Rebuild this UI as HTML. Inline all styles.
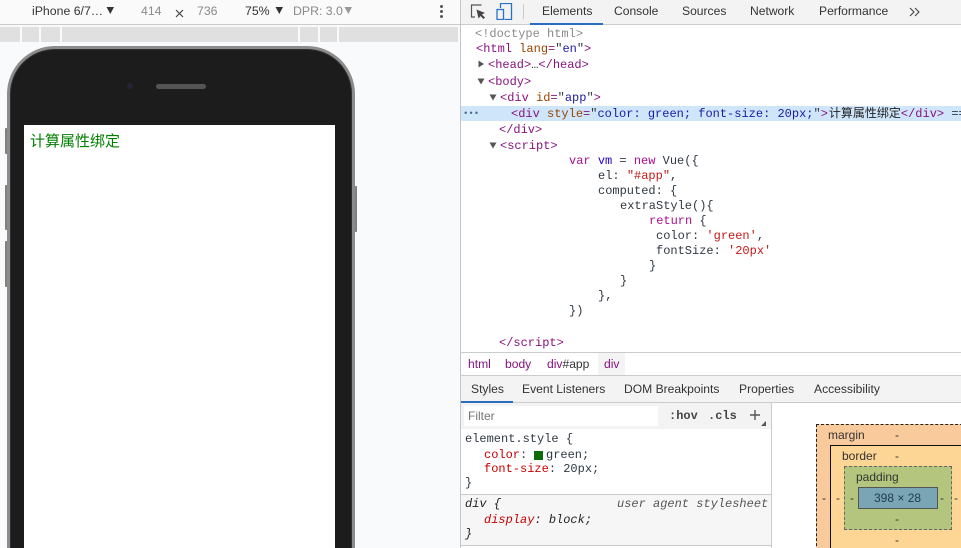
<!DOCTYPE html>
<html lang="zh">
<head>
<meta charset="utf-8">
<style>
html,body{margin:0;padding:0;width:961px;height:548px;overflow:hidden;background:#fff}
body{font-family:"Liberation Sans","Noto Sans CJK SC",sans-serif;font-size:12px;color:#333}
#w{position:relative;width:961px;height:548px;overflow:hidden}
.a{position:absolute;white-space:pre}
.r{position:absolute}
.m{font-family:"Liberation Mono","Noto Sans CJK SC",monospace;font-size:12px;line-height:14px;color:#303942;margin-top:1px}
.t{color:#881280}.n{color:#994500}.v{color:#1a1aa6}.g{color:#8a8a8a}.k{color:#aa0d91}.s{color:#c41a16}.b{color:#222}
.p{color:#c80000}
.tab{font-size:12.1px;line-height:14px;color:#333}
.bm{font-size:12px;line-height:14px;color:#333}
</style>
</head>
<body>
<div id="w">
<!-- left -->
<div class="r" style="left:0;top:0;width:460px;height:548px;background:#f9fafb"></div>
<div class="r" style="left:0;top:0;width:460px;height:24px;background:#fafafa"></div>
<div class="r" style="left:0;top:24px;width:460px;height:1px;background:#cbcbcb"></div>
<div class="a" style="left:32px;top:4px;font-size:12.3px;line-height:14px;color:#333">iPhone 6/7…</div>
<svg class="r" style="left:106px;top:6px" width="9" height="9"><path d="M0.5 1H8L4.3 8Z" fill="#333"/></svg>
<div class="a" style="left:141px;top:4px;font-size:12.3px;line-height:14px;color:#8a8a8a">414</div>
<svg class="r" style="left:175px;top:9px" width="10" height="10"><path d="M1 1L8 8M8 1L1 8" stroke="#444" stroke-width="1.2"/></svg>
<div class="a" style="left:197px;top:4px;font-size:12.3px;line-height:14px;color:#8a8a8a">736</div>
<div class="a" style="left:245px;top:4px;font-size:12.3px;line-height:14px;color:#333">75%</div>
<svg class="r" style="left:275px;top:6px" width="9" height="9"><path d="M0.5 1H8L4.3 8Z" fill="#333"/></svg>
<div class="a" style="left:293px;top:4px;font-size:12.3px;line-height:14px;color:#8a8a8a">DPR: 3.0</div>
<svg class="r" style="left:344px;top:6px" width="9" height="9"><path d="M0.5 1H8L4.3 8Z" fill="#999"/></svg>
<div class="r" style="left:440px;top:5px;width:3px;height:3px;border-radius:2px;background:#555"></div>
<div class="r" style="left:440px;top:10px;width:3px;height:3px;border-radius:2px;background:#555"></div>
<div class="r" style="left:440px;top:15px;width:3px;height:3px;border-radius:2px;background:#555"></div>
<!-- ruler -->
<div class="r" style="left:0;top:27px;width:20px;height:15px;background:#e0e0e0"></div>
<div class="r" style="left:22px;top:27px;width:17px;height:15px;background:#e0e0e0"></div>
<div class="r" style="left:41px;top:27px;width:19px;height:15px;background:#e0e0e0"></div>
<div class="r" style="left:62px;top:27px;width:236px;height:15px;background:#e0e0e0"></div>
<div class="r" style="left:300px;top:27px;width:18px;height:15px;background:#e0e0e0"></div>
<div class="r" style="left:320px;top:27px;width:17px;height:15px;background:#e0e0e0"></div>
<div class="r" style="left:339px;top:27px;width:119px;height:15px;background:#e0e0e0"></div>
<!-- phone -->
<div class="r" style="left:5px;top:128px;width:4px;height:26px;background:#808080;border-radius:1px"></div>
<div class="r" style="left:5px;top:185px;width:4px;height:45px;background:#808080;border-radius:1px"></div>
<div class="r" style="left:5px;top:241px;width:4px;height:46px;background:#808080;border-radius:1px"></div>
<div class="r" style="left:353px;top:186px;width:4px;height:46px;background:#808080;border-radius:1px"></div>
<div class="r" style="left:7px;top:46px;width:342px;height:502px;border:3px solid #8c8c8c;border-bottom:0;border-radius:48px 48px 0 0;background:#1c1c1c;box-shadow:inset 0 0 0 1px #2f2f2f"></div>
<div class="r" style="left:127px;top:83px;width:6px;height:6px;border-radius:3px;background:#23233a"></div>
<div class="r" style="left:156px;top:84px;width:50px;height:5px;border-radius:3px;background:#555"></div>
<div class="r" style="left:24px;top:125px;width:311px;height:423px;background:#fff"></div>
<div class="a" style="left:30px;top:133px;font-size:15px;line-height:18px;color:#008000">计算属性绑定</div>

<!-- devtools -->
<div class="r" style="left:460px;top:0;width:1px;height:548px;background:#c4c4c4"></div>
<div class="r" style="left:461px;top:0;width:500px;height:24px;background:#f3f3f3"></div>
<div class="r" style="left:461px;top:24px;width:500px;height:1px;background:#cbcbcb"></div>
<svg class="r" style="left:470px;top:3px" width="18" height="17" fill="none"><path d="M11.5 2H1.5V14H5" stroke="#555" stroke-width="1.2"/><path d="M6.5 6.5L15 10L11.8 11.5L15 14.5L13.5 16L10.5 13L8.5 15.5Z" fill="#444"/></svg>
<svg class="r" style="left:496px;top:3px" width="17" height="17" fill="none"><path d="M4.5 5.5V1H15.5V17H8.5" stroke="#2a72c8" stroke-width="1.3" transform="translate(0,-0.5)"/><rect x="1" y="6.5" width="6.5" height="10" stroke="#2a72c8" stroke-width="1.3"/></svg>
<div class="r" style="left:523px;top:4px;width:1px;height:15px;background:#ccc"></div>
<div class="a tab" style="left:542px;top:4px">Elements</div>
<div class="a tab" style="left:614px;top:4px">Console</div>
<div class="a tab" style="left:682px;top:4px">Sources</div>
<div class="a tab" style="left:750px;top:4px">Network</div>
<div class="a tab" style="left:819px;top:4px">Performance</div>
<svg class="r" style="left:909px;top:7px" width="11" height="10" fill="none"><path d="M1 1L5 5L1 9M6 1L10 5L6 9" stroke="#444" stroke-width="1.1"/></svg>
<div class="r" style="left:530px;top:23px;width:73px;height:2px;background:#2a6cc0"></div>

<div class="r" style="left:461px;top:106px;width:500px;height:15px;background:#cfe5fa"></div>
<div class="a m g" style="left:475px;top:26px">&lt;!doctype html&gt;</div>
<div class="a m" style="left:476px;top:41px"><span class="t">&lt;html</span> <span class="n">lang</span><span class="t">=</span>"<span class="v">en</span>"<span class="t">&gt;</span></div>
<svg class="r" style="left:478px;top:60px" width="7" height="8"><path d="M0.5 0.5L6 4L0.5 7.5Z" fill="#555"/></svg>
<div class="a m" style="left:488px;top:57px"><span class="t">&lt;head&gt;</span>…<span class="t">&lt;/head&gt;</span></div>
<svg class="r" style="left:477px;top:78px" width="8" height="7"><path d="M0.5 0.5H7.5L4 6.5Z" fill="#555"/></svg>
<div class="a m" style="left:488px;top:74px"><span class="t">&lt;body&gt;</span></div>
<svg class="r" style="left:489px;top:94px" width="8" height="7"><path d="M0.5 0.5H7.5L4 6.5Z" fill="#555"/></svg>
<div class="a m" style="left:500px;top:90px"><span class="t">&lt;div</span> <span class="n">id</span><span class="t">=</span>"<span class="v">app</span>"<span class="t">&gt;</span></div>
<div class="a m" style="left:463px;top:106px;color:#4a6a90;font-size:9px">•••</div>
<div class="a m" style="left:511px;top:106px"><span class="t">&lt;div</span> <span class="n">style</span><span class="t">=</span>"<span class="v">color: green; font-size: 20px;</span>"<span class="t">&gt;</span><span class="b" style="margin-left:1px">计算属性绑定</span><span class="t">&lt;/div&gt;</span> == $0</div>
<div class="a m" style="left:499px;top:122px"><span class="t">&lt;/div&gt;</span></div>
<svg class="r" style="left:489px;top:142px" width="8" height="7"><path d="M0.5 0.5H7.5L4 6.5Z" fill="#555"/></svg>
<div class="a m" style="left:500px;top:138px"><span class="t">&lt;script&gt;</span></div>
<div class="a m" style="left:569px;top:153px"><span class="k">var</span> <span style="color:#1c00cf">vm</span> = <span class="k">new</span> Vue({</div>
<div class="a m" style="left:598px;top:168px">el: <span class="s">"#app"</span>,</div>
<div class="a m" style="left:598px;top:183px">computed: {</div>
<div class="a m" style="left:620px;top:198px">extraStyle(){</div>
<div class="a m" style="left:649px;top:213px"><span class="k">return</span> {</div>
<div class="a m" style="left:656px;top:228px">color: <span class="s">'green'</span>,</div>
<div class="a m" style="left:656px;top:243px">fontSize: <span class="s">'20px'</span></div>
<div class="a m" style="left:649px;top:258px">}</div>
<div class="a m" style="left:620px;top:273px">}</div>
<div class="a m" style="left:598px;top:288px">},</div>
<div class="a m" style="left:569px;top:303px">})</div>
<div class="a m" style="left:499px;top:335px"><span class="t">&lt;/script&gt;</span></div>

<!-- breadcrumb -->
<div class="r" style="left:461px;top:352px;width:500px;height:1px;background:#cbcbcb"></div>
<div class="r" style="left:598px;top:353px;width:27px;height:22px;background:#f3f3f3"></div>
<div class="a tab" style="left:468px;top:357px;color:#881280">html</div>
<div class="a tab" style="left:505px;top:357px;color:#881280">body</div>
<div class="a tab" style="left:547px;top:357px"><span style="color:#881280">div</span>#app</div>
<div class="a tab" style="left:604px;top:357px;color:#881280">div</div>
<div class="r" style="left:461px;top:375px;width:500px;height:1px;background:#cbcbcb"></div>
<!-- sub tabs -->
<div class="r" style="left:461px;top:376px;width:500px;height:27px;background:#f3f3f3"></div>
<div class="r" style="left:461px;top:402px;width:500px;height:1px;background:#cbcbcb"></div>
<div class="r" style="left:461px;top:401px;width:52px;height:2px;background:#2a6cc0"></div>
<div class="a tab" style="left:471px;top:382px">Styles</div>
<div class="a tab" style="left:522px;top:382px">Event Listeners</div>
<div class="a tab" style="left:624px;top:382px">DOM Breakpoints</div>
<div class="a tab" style="left:739px;top:382px">Properties</div>
<div class="a tab" style="left:814px;top:382px">Accessibility</div>
<!-- styles pane -->
<div class="r" style="left:461px;top:403px;width:310px;height:26px;background:#f3f3f3"></div>
<div class="r" style="left:464px;top:406px;width:194px;height:20px;background:#fff"></div>
<div class="a" style="left:468px;top:409px;font-size:12px;line-height:14px;color:#757575">Filter</div>
<div class="a m" style="left:669px;top:408px;font-weight:bold;color:#444">:hov</div>
<div class="a m" style="left:708px;top:408px;font-weight:bold;color:#444">.cls</div>
<svg class="r" style="left:749px;top:409px" width="12" height="12"><path d="M6 1V11M1 6H11" stroke="#555" stroke-width="1.4"/></svg>
<svg class="r" style="left:761px;top:421px" width="5" height="5"><path d="M5 0V5H0Z" fill="#555"/></svg>
<div class="r" style="left:771px;top:403px;width:1px;height:145px;background:#cbcbcb"></div>
<div class="a m" style="left:465px;top:431px">element.style {</div>
<div class="a m" style="left:484px;top:447px"><span class="p">color</span>: </div>
<div class="r" style="left:534px;top:451px;width:9px;height:9px;background:#0b6b0b"></div>
<div class="a m" style="left:546px;top:447px">green;</div>
<div class="a m" style="left:484px;top:461px"><span class="p">font-size</span>: 20px;</div>
<div class="a m" style="left:465px;top:475px">}</div>
<div class="r" style="left:461px;top:494px;width:310px;height:1px;background:#cbcbcb"></div>
<div class="r" style="left:461px;top:495px;width:310px;height:50px;background:#f6f6f6"></div>
<div class="a m" style="left:465px;top:496px;font-style:italic;color:#222">div {</div>
<div class="a m" style="left:617px;top:496px;font-style:italic;color:#555">user agent stylesheet</div>
<div class="a m" style="left:484px;top:512px;font-style:italic;color:#222"><span class="p">display</span>: block;</div>
<div class="a m" style="left:465px;top:526px;font-style:italic;color:#222">}</div>
<div class="r" style="left:461px;top:545px;width:310px;height:1px;background:#cbcbcb"></div>
<!-- box model -->
<div class="r" style="left:816px;top:424px;width:160px;height:140px;background:#f9cb9c;border:1px dashed #222"></div>
<div class="r" style="left:830px;top:445px;width:140px;height:120px;background:#fdd595;border:1px solid #111"></div>
<div class="r" style="left:844px;top:466px;width:106px;height:62px;background:#b4c67d;border:1px dashed #666"></div>
<div class="r" style="left:858px;top:487px;width:78px;height:20px;background:#7aa5b5;border:1px solid #555"></div>
<div class="a bm" style="left:828px;top:428px">margin</div>
<div class="a bm" style="left:895px;top:428px">-</div>
<div class="a bm" style="left:842px;top:449px">border</div>
<div class="a bm" style="left:895px;top:449px">-</div>
<div class="a bm" style="left:856px;top:470px">padding</div>
<div class="a bm" style="left:874px;top:491px;color:#1f3a4d">398 × 28</div>
<div class="a bm" style="left:822px;top:491px">-</div>
<div class="a bm" style="left:836px;top:491px">-</div>
<div class="a bm" style="left:850px;top:491px">-</div>
<div class="a bm" style="left:940px;top:491px">-</div>
<div class="a bm" style="left:954px;top:491px">-</div>
<div class="a bm" style="left:895px;top:512px">-</div>
<div class="a bm" style="left:895px;top:533px">-</div>
</div>
</body>
</html>
